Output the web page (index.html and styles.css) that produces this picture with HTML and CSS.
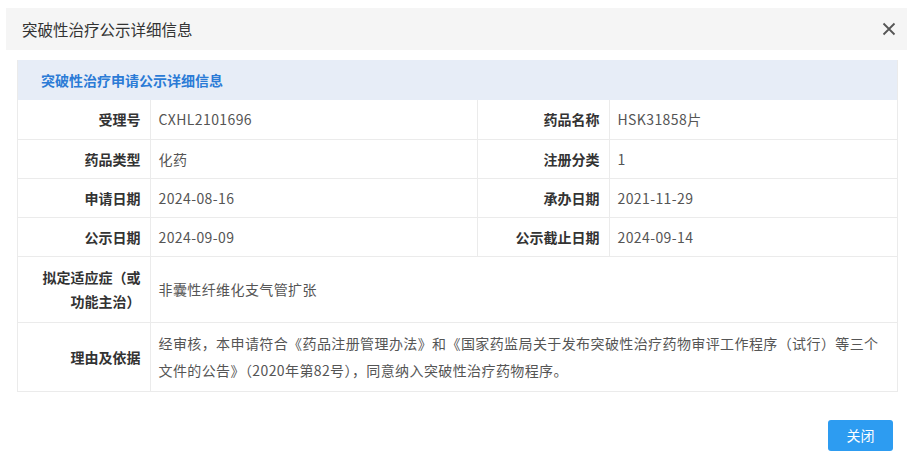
FILE: index.html
```html
<!DOCTYPE html>
<html lang="zh-CN">
<head>
	<meta charset="UTF-8">
	<title>突破性治疗公示详细信息</title>
	<link rel="stylesheet" href="styles.css">
</head>
<body>
	<div class="dialog">
		<div class="dialog-head">
			<span class="dialog-title">突破性治疗公示详细信息</span>
			<span class="dialog-close">
				<svg width="14" height="14" viewBox="0 0 14 14"><path d="M1.5 1.5L12.5 12.5M12.5 1.5L1.5 12.5" stroke="#555" stroke-width="1.8" fill="none"/></svg>
			</span>
		</div>

		<div class="panel">
			<div class="panel-title">突破性治疗申请公示详细信息</div>
			<table class="detail">
				<colgroup>
					<col class="c-label">
					<col class="c-value">
					<col class="c-label2">
					<col>
				</colgroup>
				<tr>
					<th>受理号</th><td>CXHL2101696</td>
					<th>药品名称</th><td>HSK31858片</td>
				</tr>
				<tr>
					<th>药品类型</th><td>化药</td>
					<th>注册分类</th><td>1</td>
				</tr>
				<tr>
					<th>申请日期</th><td>2024-08-16</td>
					<th>承办日期</th><td>2021-11-29</td>
				</tr>
				<tr>
					<th>公示日期</th><td>2024-09-09</td>
					<th>公示截止日期</th><td>2024-09-14</td>
				</tr>
				<tr class="tall">
					<th>拟定适应症（或功能主治）</th>
					<td colspan="3">非囊性纤维化支气管扩张</td>
				</tr>
				<tr class="tall">
					<th>理由及依据</th>
					<td colspan="3" class="long">经审核，本申请符合《药品注册管理办法》和《国家药监局关于发布突破性治疗药物审评工作程序（试行）等三个文件的公告》（2020年第82号），同意纳入突破性治疗药物程序。</td>
				</tr>
			</table>
		</div>

		<div class="dialog-foot">
			<button class="btn">关闭</button>
		</div>
	</div>
</body>
</html>
```

FILE: styles.css
```css
*{
	margin: 0;
	padding: 0;
	box-sizing: border-box;
}
body{
	background: #fff;
	font-family: "Noto Sans CJK SC", "Microsoft YaHei", sans-serif;
	font-size: 14px;
	color: #333;
}
.dialog{
	width: 910px;
	height: 459px;
	padding-top: 8px;
}
.dialog-head{
	margin: 0 3px 0 6px;
	height: 42px;
	background: #f5f5f5;
	display: flex;
	align-items: center;
	justify-content: space-between;
	padding: 0 11px 0 16px;
}
.dialog-title{
	font-size: 15.5px;
	color: #333;
}
.dialog-close{
	display: flex;
	cursor: pointer;
}
.panel{
	margin: 10px 12px 0 17px;
	border: 1px solid #ebebeb;
	border-top: none;
}
.panel-title{
	height: 40px;
	line-height: 40px;
	background: #e7edf7;
	color: #2b7bd6;
	font-weight: bold;
	padding-left: 23px;
}
.detail{
	width: 100%;
	border-collapse: collapse;
	table-layout: fixed;
}
.c-label{
	width: 132px;
}
.c-value{
	width: 327px;
}
.c-label2{
	width: 132px;
}
.detail th,
.detail td{
	border: 1px solid #ebebeb;
	height: 39px;
	line-height: 24px;
	padding: 7px 9px 7px 8px;
	vertical-align: middle;
}
.detail tr:first-child th,
.detail tr:first-child td{
	border-top: none;
}
.detail th:first-child{
	border-left: none;
}
.detail td:last-child{
	border-right: none;
}
.detail tr:last-child th,
.detail tr:last-child td{
	border-bottom: none;
}
.detail th{
	text-align: right;
	font-weight: bold;
	color: #333;
	padding-right: 9px;
}
.detail td{
	color: #555;
	letter-spacing: 0.4px;
}
.detail tr.tall th{
	padding-left: 18px;
}
.detail tr.tall td{
	height: 66px;
}
.detail td.long{
	line-height: 27px;
	padding-right: 15px;
	height: 68px;
}
.dialog-foot{
	display: flex;
	justify-content: flex-end;
	padding: 28px 17px 0 0;
}
.btn{
	width: 65px;
	height: 31px;
	border: none;
	border-radius: 3px;
	background: #2d9cf1;
	color: #fff;
	font-family: inherit;
	font-size: 14px;
	cursor: pointer;
}
```
